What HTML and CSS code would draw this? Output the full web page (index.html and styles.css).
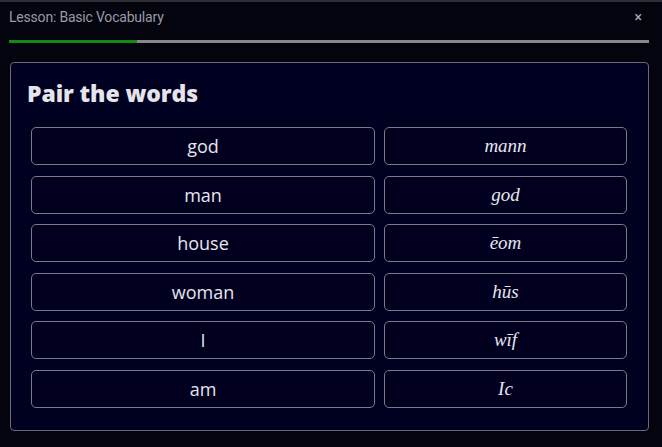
FILE: index.html
```html
<!DOCTYPE html>
<html>
<head>
<meta charset="utf-8">
<link rel="stylesheet" href="styles.css">
</head>
<body>
<div class="app">
  <header class="topbar">
    <span class="title">Lesson: Basic Vocabulary</span>
    <span class="close">×</span>
  </header>
  <div class="progress"><div class="progress-fill" style="width: 20%"></div></div>
  <section class="panel">
    <h1 class="heading">Pair the words</h1>
    <div class="pairs">
      <div class="col">
        <button class="word">god</button>
        <button class="word">man</button>
        <button class="word">house</button>
        <button class="word">woman</button>
        <button class="word">I</button>
        <button class="word">am</button>
      </div>
      <div class="col">
        <button class="word oe">mann</button>
        <button class="word oe">god</button>
        <button class="word oe">ēom</button>
        <button class="word oe">hūs</button>
        <button class="word oe">wīf</button>
        <button class="word oe">Ic</button>
      </div>
    </div>
  </section>
</div>
</body>
</html>
```

FILE: styles.css
```css
html, body {
  margin: 0;
  padding: 0;
  background: #04040f;
  height: 100%;
}
.app {
  border-top: 2px solid #2e2e36;
  height: 445px;
  box-sizing: border-box;
  padding: 0 13px 0 9px;
  display: flex;
  flex-direction: column;
}
.topbar {
  display: flex;
  align-items: center;
  justify-content: space-between;
  height: 30px;
  font-family: Roboto, "Liberation Sans", sans-serif;
  font-size: 14px;
  color: #9a9aa4;
}
.title {
  letter-spacing: -0.2px;
}
.close {
  font-size: 14px;
  padding-right: 7px;
  color: #b0b0b8;
}
.progress {
  margin-top: 8px;
  height: 3px;
  background: #888888;
}
.progress-fill {
  height: 100%;
  background: #138a13;
}
.panel {
  margin: 19px 0 0 1px;
  border: 1px solid #6a6a78;
  border-radius: 4px;
  background: #000020;
  padding: 15px 21px 22px 20px;
  width: 639px;
  box-sizing: border-box;
}
.heading {
  margin: 0 0 19px -4px;
  font-family: "Open Sans", sans-serif;
  font-weight: 800;
  font-size: 23px;
  line-height: 30px;
  color: #e4e4ea;
  letter-spacing: -0.1px;
}
.pairs {
  display: grid;
  grid-template-columns: 344fr 243fr;
  column-gap: 9px;
}
.col {
  display: flex;
  flex-direction: column;
  gap: 10.6px;
}
.word {
  height: 38px;
  border: 1px solid #7a7a86;
  border-radius: 5px;
  background: #01011f;
  color: #e6e6ee;
  font-family: "Open Sans", sans-serif;
  font-size: 18px;
  padding: 0;
  cursor: pointer;
}
.word.oe {
  font-family: "Liberation Serif", serif;
  font-style: italic;
  font-size: 19px;
}
```
